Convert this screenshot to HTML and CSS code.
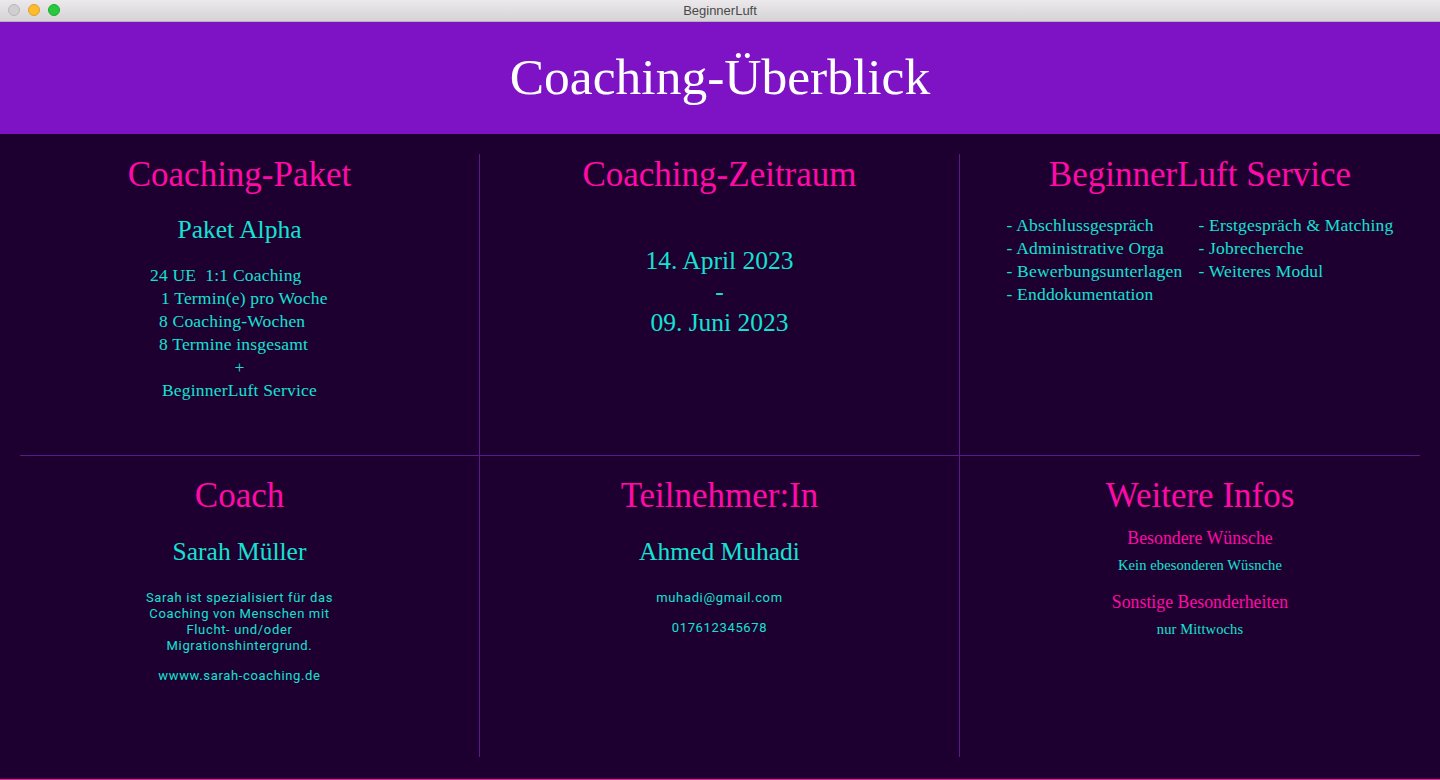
FILE: index.html
```html
<!DOCTYPE html>
<html lang="de">
<head>
<meta charset="utf-8">
<title>BeginnerLuft</title>
<link rel="stylesheet" href="styles.css">
</head>
<body>
<div class="window">
  <div class="titlebar">
    <div class="lights">
      <span class="light light-close"></span>
      <span class="light light-min"></span>
      <span class="light light-max"></span>
    </div>
    <div class="window-title">BeginnerLuft</div>
  </div>
  <header class="hero">
    <h1>Coaching-Überblick</h1>
  </header>
  <main class="board">
    <section class="cell top">
      <h2>Coaching-Paket</h2>
      <div class="subtitle">Paket Alpha</div>
      <div class="pkg">
        <div class="pkg-line i1">24 UE&nbsp; 1:1 Coaching</div>
        <div class="pkg-line i2">1 Termin(e) pro Woche</div>
        <div class="pkg-line i3">8 Coaching-Wochen</div>
        <div class="pkg-line i3">8 Termine insgesamt</div>
        <div class="pkg-line c">+</div>
        <div class="pkg-line c">BeginnerLuft Service</div>
      </div>
    </section>
    <section class="cell top">
      <h2>Coaching-Zeitraum</h2>
      <div class="dates">
        <div>14. April 2023</div>
        <div>-</div>
        <div>09. Juni 2023</div>
      </div>
    </section>
    <section class="cell top last">
      <h2>BeginnerLuft Service</h2>
      <div class="services">
        <ul>
          <li>- Abschlussgespräch</li>
          <li>- Administrative Orga</li>
          <li>- Bewerbungsunterlagen</li>
          <li>- Enddokumentation</li>
        </ul>
        <ul>
          <li>- Erstgespräch &amp; Matching</li>
          <li>- Jobrecherche</li>
          <li>- Weiteres Modul</li>
        </ul>
      </div>
    </section>
    <div class="divider"></div>
    <section class="cell bottom">
      <h2>Coach</h2>
      <div class="subtitle name">Sarah Müller</div>
      <p class="sans desc">Sarah ist spezialisiert für das Coaching von Menschen mit Flucht- und/oder Migrationshintergrund.</p>
      <p class="sans web">wwww.sarah-coaching.de</p>
    </section>
    <section class="cell bottom">
      <h2>Teilnehmer:In</h2>
      <div class="subtitle name">Ahmed Muhadi</div>
      <p class="sans mail">muhadi@gmail.com</p>
      <p class="sans phone">017612345678</p>
    </section>
    <section class="cell bottom last">
      <h2>Weitere Infos</h2>
      <div class="info-label first">Besondere Wünsche</div>
      <div class="info-value">Kein ebesonderen Wüsnche</div>
      <div class="info-label">Sonstige Besonderheiten</div>
      <div class="info-value">nur Mittwochs</div>
    </section>
  </main>
  <div class="edge"></div>
</div>
</body>
</html>
```
FILE: styles.css
```css
* { box-sizing: border-box; }
html, body { margin: 0; padding: 0; }
body {
  width: 1440px;
  height: 780px;
  overflow: hidden;
  background: #1e0030;
  font-family: "Liberation Serif", "DejaVu Serif", serif;
}
.window {
  display: flex;
  flex-direction: column;
  height: 780px;
}
.titlebar {
  height: 22px;
  flex: 0 0 22px;
  display: flex;
  align-items: center;
  justify-content: center;
  position: relative;
  background: linear-gradient(#ebe9eb, #d5d3d5);
  border-bottom: 1px solid #b4b2b4;
}
.lights {
  position: absolute;
  left: 8px;
  top: 4px;
  display: flex;
  gap: 8px;
}
.light {
  width: 12px;
  height: 12px;
  border-radius: 50%;
  display: block;
}
.light-close { background: #d0cfd0; border: 1px solid #b8b7b8; }
.light-min { background: #fdbb2d; border: 1px solid #dea123; }
.light-max { background: #27c93f; border: 1px solid #1ea934; }
.window-title {
  font-family: "Liberation Sans", "Noto Sans", sans-serif;
  font-size: 13px;
  color: #4a4a4a;
  line-height: 21px;
}
.hero {
  flex: 0 0 112px;
  background: #7d13c4;
  display: flex;
  align-items: center;
  justify-content: center;
}
.hero h1 {
  margin: 0;
  font-weight: normal;
  color: #ffffff;
  font-size: 51.5px;
  line-height: 60px;
  padding-bottom: 2px;
}
.board {
  flex: 1;
  display: grid;
  grid-template-columns: 480px 480px 480px;
  grid-template-rows: 301px 1px 301px;
  align-content: start;
  padding-top: 20px;
}
.edge {
  flex: 0 0 1px;
  background: #ff10a8;
}
.cell {
  display: flex;
  flex-direction: column;
  align-items: center;
  text-align: center;
  border-right: 1px solid #5a1a8c;
}
.cell.last { border-right: none; }
.cell.bottom { padding-top: 19px; }
.divider {
  grid-column: 1 / -1;
  margin: 0 20px;
  background: #5a1a8c;
}
.cell h2 {
  margin: 0;
  font-weight: normal;
  font-size: 35px;
  line-height: 42px;
  color: #ff0aa8;
}
.subtitle {
  margin-top: 19px;
  font-size: 25.5px;
  line-height: 30px;
  color: #14e2d2;
}
.subtitle.name { margin-top: 20px; }
.pkg {
  align-self: stretch;
  margin-top: 19px;
  font-size: 17.5px;
  line-height: 23px;
  letter-spacing: 0.2px;
  color: #14e2d2;
}
.pkg-line { white-space: nowrap; text-align: left; }
.pkg-line.i1 { padding-left: 150px; }
.pkg-line.i2 { padding-left: 161px; }
.pkg-line.i3 { padding-left: 159px; }
.pkg-line.c { text-align: center; }
.dates {
  margin-top: 49px;
  font-size: 25.5px;
  line-height: 31px;
  color: #14e2d2;
}
.services {
  margin-top: 18px;
  display: flex;
  gap: 16px;
  font-size: 17.5px;
  line-height: 23px;
  letter-spacing: 0.2px;
  color: #14e2d2;
  text-align: left;
}
.services ul {
  list-style: none;
  margin: 0;
  padding: 0;
}
.sans {
  font-family: "Roboto", "Noto Sans", sans-serif;
  font-size: 13px;
  line-height: 16px;
  letter-spacing: 0.65px;
  color: #14e2d2;
  margin: 0;
}
.desc { margin-top: 23px; width: 205px; }
.web { margin-top: 14px; }
.mail { margin-top: 23px; }
.phone { margin-top: 14px; }
.info-label {
  margin-top: 18px;
  font-size: 17.8px;
  line-height: 20px;
  color: #ff0aa8;
}
.info-label.first { margin-top: 11px; }
.info-value {
  margin-top: 8px;
  font-size: 14.5px;
  line-height: 18px;
  color: #14e2d2;
  letter-spacing: 0.1px;
}
```
